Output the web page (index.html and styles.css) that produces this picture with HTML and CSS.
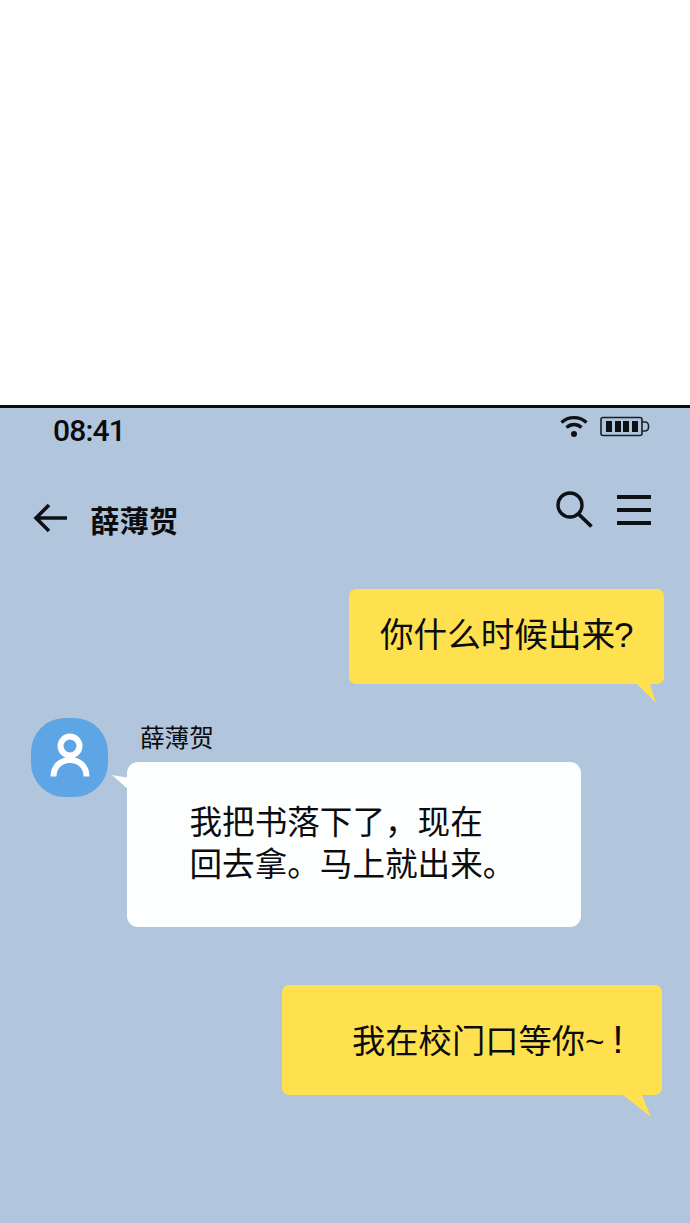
FILE: index.html
```html
<!DOCTYPE html>
<html lang="zh-CN">
<head>
<meta charset="utf-8">
<title>薛薄贺</title>
<link rel="stylesheet" href="styles.css">
</head>
<body>
<div class="blank"></div>
<main class="phone">
  <div class="status">
    <span class="time">08:41</span>
    <div class="status-icons">
      <svg class="wifi" width="28" height="24" viewBox="0 0 28 24"><path d="M1.500 8.500C8.500 2 19.500 2 26.500 8.500M6.500 13.500C11 9.500 17 9.500 21.500 13.500" fill="none" stroke="#0d1116" stroke-width="3.400"/><circle cx="14" cy="20" r="3" fill="#0d1116"/></svg>
      <svg class="battery" width="50" height="22" viewBox="0 0 50 22"><rect x="1" y="1.500" width="41" height="18" rx="2" fill="none" stroke="#1a2026" stroke-width="1.600"/><path d="M42 6h3a3.500 3.500 0 0 1 3.500 3.500v2a3.500 3.500 0 0 1-3.500 3.500h-3" fill="none" stroke="#1a2026" stroke-width="1.600"/><path d="M6 5h6v11H6zM15 5h6v11h-6zM23 5h6v11h-6zM32 5h6v11h-6z" fill="#0d1116"/></svg>
    </div>
  </div>
  <header class="nav">
    <div class="nav-left">
      <svg class="back" width="36" height="32" viewBox="0 0 36 32"><path d="M34 16H3M16 3 3 16l13 13" fill="none" stroke="#0d1116" stroke-width="3.600"/></svg>
      <h1 class="title">薛薄贺</h1>
    </div>
    <div class="nav-right">
      <svg class="search" width="40" height="38" viewBox="0 0 40 38"><circle cx="16" cy="15" r="12" fill="none" stroke="#0d1116" stroke-width="3.400"/><path d="M24.500 24 37.500 36.500" fill="none" stroke="#0d1116" stroke-width="3.800"/></svg>
      <div class="menu"><i></i><i></i><i></i></div>
    </div>
  </header>
  <section class="chat">
    <div class="msg-out first">
      <div class="bubble yellow b1">
        你什么时候出来<span class="qmark">?</span>
        <svg class="tail-out" width="22" height="22" viewBox="0 0 22 22"><path d="M3 0H16V2L22 21 3 2Z" fill="#ffe14f"/></svg>
      </div>
    </div>
    <div class="msg-in">
      <div class="avatar">
        <svg width="44" height="50" viewBox="0 0 44 50"><circle cx="22" cy="13" r="9.500" fill="none" stroke="#fff" stroke-width="6"/><path d="M5.500 43.500C5.500 34 12 27 22 27s16.500 7 16.500 16.500" fill="none" stroke="#fff" stroke-width="6"/></svg>
      </div>
      <div class="in-col">
        <div class="name">薛薄贺</div>
        <div class="bubble white">
          <svg class="tail-in" width="18" height="16" viewBox="0 0 18 16"><path d="M0 0 18 3V16Z" fill="#fdfefe"/></svg>
          我把书落下了，现在<br>回去拿。马上就出来。
        </div>
      </div>
    </div>
    <div class="msg-out last">
      <div class="bubble yellow b2">
        我在校门口等你~<span class="bang">!</span>
        <svg class="tail-out2" width="30" height="26" viewBox="0 0 30 26"><path d="M1 0H20V2L29 24 1 2Z" fill="#ffe14f"/></svg>
      </div>
    </div>
  </section>
</main>
</body>
</html>
```
FILE: styles.css
```css
* { box-sizing: border-box; }
html, body { margin: 0; padding: 0; }
body {
  width: 690px;
  height: 1223px;
  overflow: hidden;
  background: #fff;
  color: #0a0c0f;
  font-family: "Liberation Sans", "Noto Sans CJK SC", sans-serif;
}
.blank { height: 405px; background: #fff; }
.phone {
  height: 818px;
  background: #b1c5dc;
  border-top: 3px solid #0b0d10;
}
.status {
  display: flex;
  justify-content: space-between;
  align-items: flex-start;
  padding: 3px 40px 0 53px;
  height: 60px;
}
.time {
  font-family: Roboto, sans-serif;
  font-size: 30px;
  font-weight: 500;
  line-height: 40px;
  letter-spacing: -0.8px;
}
.status-icons { display: flex; gap: 12px; padding-top: 5px; }
.wifi { display: block; margin-top: -2px; }
.battery { display: block; }
.nav {
  display: flex;
  justify-content: space-between;
  align-items: flex-start;
  padding: 0 39px 0 33px;
  height: 121px;
}
.nav-left { display: flex; align-items: flex-start; gap: 21px; padding-top: 33px; }
.back { display: block; margin-top: 1px; width: 36px; }
.title {
  margin: 0;
  font-size: 29.500px;
  line-height: 42px;
  font-weight: 700;
}
.nav-right { display: flex; gap: 23px; align-items: flex-start; padding-top: 22px; }
.search { display: block; }
.menu { display: flex; flex-direction: column; gap: 9px; width: 34px; padding-top: 5px; }
.menu i { display: block; height: 4px; background: #0d1116; }
.chat { display: flex; flex-direction: column; }
.bubble {
  position: relative;
  line-height: 42px;
  white-space: nowrap;
}
.yellow { background: #ffe14f; border-radius: 7px; }
.msg-out { display: flex; justify-content: flex-end; }
.msg-out.first { padding-right: 26px; }
.b1 {
  width: 315px;
  height: 95px;
  padding: 25px 0 0 31px;
  font-size: 33.600px;
}
.qmark { font-size: 35px; margin-left: -1px; }
.b2 {
  width: 380px;
  height: 110px;
  padding: 34px 0 0 70px;
  font-size: 33.300px;
}
.bang { font-size: 39px; margin-left: 8px; }
.tail-out { display: block; position: absolute; right: 8px; bottom: -20px; }
.tail-out2 { display: block; position: absolute; right: 10px; bottom: -24px; }
.msg-in { display: flex; padding-left: 31px; margin-top: 34px; }
.avatar {
  width: 77px;
  height: 79px;
  border-radius: 34px;
  background: #5da5e4;
  display: flex;
  align-items: center;
  justify-content: center;
  flex: none;
}
.in-col { margin-left: 19px; }
.name {
  font-size: 24.600px;
  line-height: 36px;
  margin: 3px 0 5px 13px;
}
.white {
  background: #fdfefe;
  border-radius: 11px;
  width: 454px;
  height: 165px;
  padding: 40px 0 0 62.500px;
  font-size: 32.600px;
}
.tail-in { display: block; position: absolute; left: -15px; top: 13px; }
.msg-out.last { padding-right: 28px; margin-top: 58px; }
```
